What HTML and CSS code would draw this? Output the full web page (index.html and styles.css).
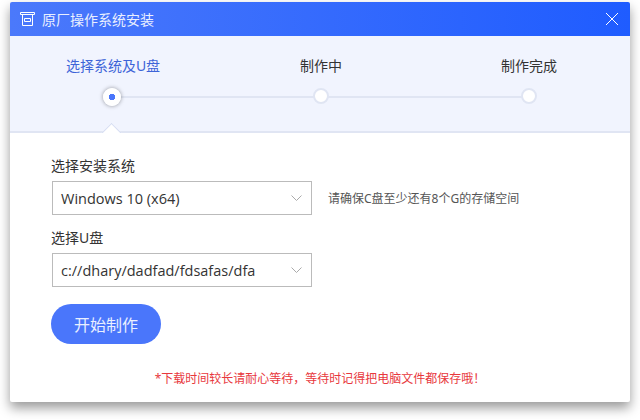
FILE: index.html
```html
<!DOCTYPE html>
<html lang="zh-CN">
<head>
  <meta charset="UTF-8" />
  <title>原厂操作系统安装</title>
  <link rel="stylesheet" href="styles.css">
</head>
<body>
  <div class="window">
    <!-- Title bar -->
    <header class="title-bar">
      <svg class="title-icon" width="15" height="14" viewBox="0 0 15 14" fill="none" stroke="#fff" stroke-width="1">
        <path d="M0.5 0.5h14v2h-14zM2.5 2.5v11h10v-11M4.5 6.5h6v3h-6z" />
      </svg>
      <span class="title-text">原厂操作系统安装</span>
      <svg class="close-icon" width="14" height="14" viewBox="0 0 14 14" fill="none" stroke="#fff" stroke-width="1">
        <path d="M1 1l12 12M13 1l-12 12" />
      </svg>
    </header>

    <!-- Steps -->
    <section class="steps">
      <div class="step step-active">
        <span class="step-label">选择系统及U盘</span>
        <span class="step-dot"></span>
      </div>
      <div class="step">
        <span class="step-label">制作中</span>
        <span class="step-dot"></span>
      </div>
      <div class="step">
        <span class="step-label">制作完成</span>
        <span class="step-dot"></span>
      </div>
      <span class="step-notch"></span>
    </section>

    <!-- Form -->
    <section class="form">
      <label class="field-label">选择安装系统</label>
      <div class="field-row">
        <div class="select">
          <span>Windows 10 (x64)</span>
          <svg class="chevron" width="11" height="6" viewBox="0 0 11 6" fill="none" stroke="#aaa" stroke-width="1">
            <path d="M0.5 0.5l5 5 5-5" />
          </svg>
        </div>
        <span class="hint">请确保C盘至少还有8个G的存储空间</span>
      </div>
      <label class="field-label field-label-second">选择U盘</label>
      <div class="field-row">
        <div class="select">
          <span>c://dhary/dadfad/fdsafas/dfa</span>
          <svg class="chevron" width="11" height="6" viewBox="0 0 11 6" fill="none" stroke="#aaa" stroke-width="1">
            <path d="M0.5 0.5l5 5 5-5" />
          </svg>
        </div>
      </div>
      <button class="start-btn">开始制作</button>
      <p class="warning">*下载时间较长请耐心等待，等待时记得把电脑文件都保存哦！</p>
    </section>
  </div>
</body>
</html>
```

FILE: styles.css
```css
/* Global Styles */
* {
  margin: 0;
  padding: 0;
  box-sizing: border-box;
}
body {
  width: 640px;
  height: 420px;
  padding: 2px 10px 0;
  overflow: hidden;
  background: #fff;
  color: #333;
  font-family: "Noto Sans", "Noto Sans CJK SC", sans-serif;
}

/* Window */
.window {
  width: 620px;
  height: 400px;
  background: #fff;
  border-radius: 2px;
  box-shadow: 0 6px 12px rgba(0, 0, 0, 0.4);
  overflow: hidden;
}

/* Title bar */
.title-bar {
  height: 34px;
  display: flex;
  align-items: center;
  padding: 0 11px 0 10px;
  background: linear-gradient(90deg, #4b79fb, #1f5cff);
  color: #e9efff;
}
.title-icon {
  flex: none;
}
.title-text {
  margin-left: 7px;
  font-size: 14px;
}
.close-icon {
  margin-left: auto;
}

/* Steps */
.steps {
  position: relative;
  height: 97px;
  display: flex;
  gap: 152px;
  padding: 19px 0 0 75px;
  background: #f1f4fe;
  border-bottom: 2px solid #e0e5f3;
}
.steps::before {
  content: "";
  position: absolute;
  left: 103px;
  top: 60px;
  width: 416px;
  height: 2px;
  background: #e0e5f3;
}
.step {
  position: relative;
  width: 56px;
  display: flex;
  flex-direction: column;
  align-items: center;
}
.step-label {
  white-space: nowrap;
  font-size: 14px;
  line-height: 22px;
  color: #333;
}
.step-dot {
  width: 16px;
  height: 16px;
  margin-top: 11px;
  background: #fff;
  border: 2px solid #e0e5f3;
  border-radius: 50%;
}
.step-active .step-label {
  color: #3e64d8;
}
.step-active .step-dot {
  width: 18px;
  height: 18px;
  margin-right: 2px;
  border: 0;
  box-shadow: 0 0 4px rgba(0, 0, 0, 0.4);
  background: radial-gradient(circle, #4a76fb 0 3px, #fff 3.5px);
}
.step-notch {
  position: absolute;
  left: 94px;
  top: 90px;
  width: 15px;
  height: 15px;
  background: #fff;
  border-top: 1px solid #d5dcf2;
  border-left: 1px solid #d5dcf2;
  transform: rotate(45deg);
}

/* Form */
.form {
  position: relative;
  height: 267px;
  padding: 23px 41px 0;
  background: #fff;
}
.field-label {
  display: block;
  font-size: 14px;
  line-height: 20px;
  color: #333;
}
.field-label-second {
  margin-top: 13px;
}
.field-row {
  display: flex;
  align-items: center;
  margin-top: 5px;
}
.select {
  width: 260px;
  height: 34px;
  margin-left: 1px;
  display: flex;
  align-items: center;
  justify-content: space-between;
  padding: 0 9px 0 8px;
  border: 1px solid #bbb;
  font-family: "Open Sans", "Noto Sans", sans-serif;
  font-size: 14.5px;
  color: #333;
}
.hint {
  margin-left: 16px;
  font-size: 12px;
  color: #555;
}
.start-btn {
  display: block;
  width: 110px;
  height: 40px;
  margin-top: 17px;
  border: none;
  border-radius: 20px;
  background: #4a76fb;
  color: #e9efff;
  font-family: inherit;
  font-size: 16px;
}
.warning {
  margin-top: 25px;
  text-align: center;
  font-size: 12px;
  line-height: 20px;
  color: #e8383d;
}
```
